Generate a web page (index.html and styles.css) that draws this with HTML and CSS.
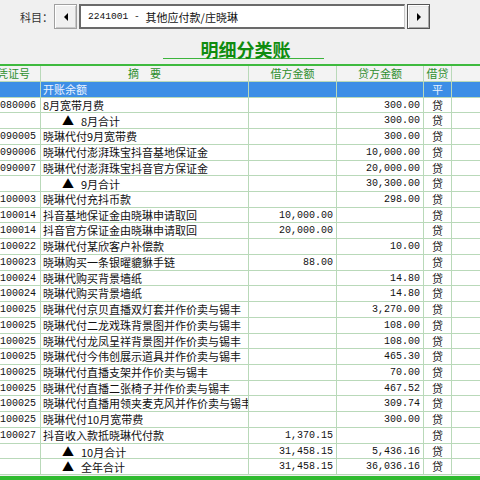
FILE: index.html
```html
<!DOCTYPE html>
<html lang="zh-CN">
<head>
<meta charset="utf-8">
<title>明细分类账</title>
<link rel="stylesheet" href="styles.css">
</head>
<body>
<div class="toolbar">
  <span class="label">科目：</span>
  <button class="nav-btn prev" type="button"><svg width="6" height="8" viewBox="0 0 6 8"><polygon points="5,0 5,8 1,4" fill="#000"/></svg></button>
  <div class="subject-box"><span class="num">2241001 - </span>其他应付款/庄晓琳</div>
  <button class="nav-btn next" type="button"><svg width="6" height="8" viewBox="0 0 6 8"><polygon points="1,0 1,8 5,4" fill="#000"/></svg></button>
</div>
<div class="title-row"><h1 class="title">明细分类账</h1></div>
<div class="ledger">
  <div class="grid">
    <div class="row head"><div class="c">凭证号</div><div class="c">摘　要</div><div class="c">借方金额</div><div class="c">贷方金额</div><div class="c">借贷</div><div class="c"></div></div>
    <div class="row sel"><div class="c v"></div><div class="c s">开账余额</div><div class="c a"></div><div class="c a"></div><div class="c d">平</div><div class="c"></div></div>
    <div class="row"><div class="c v">080006</div><div class="c s">8月宽带月费</div><div class="c a"></div><div class="c a">300.00</div><div class="c d">贷</div><div class="c"></div></div>
    <div class="row"><div class="c v"></div><div class="c s sub"><span class="tri">▲</span>8月合计</div><div class="c a"></div><div class="c a">300.00</div><div class="c d">贷</div><div class="c"></div></div>
    <div class="row"><div class="c v">090005</div><div class="c s">晓琳代付9月宽带费</div><div class="c a"></div><div class="c a">300.00</div><div class="c d">贷</div><div class="c"></div></div>
    <div class="row"><div class="c v">090006</div><div class="c s">晓琳代付澎湃珠宝抖音基地保证金</div><div class="c a"></div><div class="c a">10,000.00</div><div class="c d">贷</div><div class="c"></div></div>
    <div class="row"><div class="c v">090007</div><div class="c s">晓琳代付澎湃珠宝抖音官方保证金</div><div class="c a"></div><div class="c a">20,000.00</div><div class="c d">贷</div><div class="c"></div></div>
    <div class="row"><div class="c v"></div><div class="c s sub"><span class="tri">▲</span>9月合计</div><div class="c a"></div><div class="c a">30,300.00</div><div class="c d">贷</div><div class="c"></div></div>
    <div class="row"><div class="c v">100003</div><div class="c s">晓琳代付充抖币款</div><div class="c a"></div><div class="c a">298.00</div><div class="c d">贷</div><div class="c"></div></div>
    <div class="row"><div class="c v">100014</div><div class="c s">抖音基地保证金由晓琳申请取回</div><div class="c a">10,000.00</div><div class="c a"></div><div class="c d">贷</div><div class="c"></div></div>
    <div class="row"><div class="c v">100014</div><div class="c s">抖音官方保证金由晓琳申请取回</div><div class="c a">20,000.00</div><div class="c a"></div><div class="c d">贷</div><div class="c"></div></div>
    <div class="row"><div class="c v">100022</div><div class="c s">晓琳代付某欣客户补偿款</div><div class="c a"></div><div class="c a">10.00</div><div class="c d">贷</div><div class="c"></div></div>
    <div class="row"><div class="c v">100023</div><div class="c s">晓琳购买一条银曜貔貅手链</div><div class="c a">88.00</div><div class="c a"></div><div class="c d">贷</div><div class="c"></div></div>
    <div class="row"><div class="c v">100024</div><div class="c s">晓琳代购买背景墙纸</div><div class="c a"></div><div class="c a">14.80</div><div class="c d">贷</div><div class="c"></div></div>
    <div class="row"><div class="c v">100024</div><div class="c s">晓琳代购买背景墙纸</div><div class="c a"></div><div class="c a">14.80</div><div class="c d">贷</div><div class="c"></div></div>
    <div class="row"><div class="c v">100025</div><div class="c s">晓琳代付京贝直播双灯套并作价卖与锡丰</div><div class="c a"></div><div class="c a">3,270.00</div><div class="c d">贷</div><div class="c"></div></div>
    <div class="row"><div class="c v">100025</div><div class="c s">晓琳代付二龙戏珠背景图并作价卖与锡丰</div><div class="c a"></div><div class="c a">108.00</div><div class="c d">贷</div><div class="c"></div></div>
    <div class="row"><div class="c v">100025</div><div class="c s">晓琳代付龙凤呈祥背景图并作价卖与锡丰</div><div class="c a"></div><div class="c a">108.00</div><div class="c d">贷</div><div class="c"></div></div>
    <div class="row"><div class="c v">100025</div><div class="c s">晓琳代付今伟创展示道具并作价卖与锡丰</div><div class="c a"></div><div class="c a">465.30</div><div class="c d">贷</div><div class="c"></div></div>
    <div class="row"><div class="c v">100025</div><div class="c s">晓琳代付直播支架并作价卖与锡丰</div><div class="c a"></div><div class="c a">70.00</div><div class="c d">贷</div><div class="c"></div></div>
    <div class="row"><div class="c v">100025</div><div class="c s">晓琳代付直播二张椅子并作价卖与锡丰</div><div class="c a"></div><div class="c a">467.52</div><div class="c d">贷</div><div class="c"></div></div>
    <div class="row"><div class="c v">100025</div><div class="c s">晓琳代付直播用领夹麦克风并作价卖与锡丰</div><div class="c a"></div><div class="c a">309.74</div><div class="c d">贷</div><div class="c"></div></div>
    <div class="row"><div class="c v">100025</div><div class="c s">晓琳代付10月宽带费</div><div class="c a"></div><div class="c a">300.00</div><div class="c d">贷</div><div class="c"></div></div>
    <div class="row"><div class="c v">100027</div><div class="c s">抖音收入款抵晓琳代付款</div><div class="c a">1,370.15</div><div class="c a"></div><div class="c d">贷</div><div class="c"></div></div>
    <div class="row"><div class="c v"></div><div class="c s sub"><span class="tri">▲</span>10月合计</div><div class="c a">31,458.15</div><div class="c a">5,436.16</div><div class="c d">贷</div><div class="c"></div></div>
    <div class="row"><div class="c v"></div><div class="c s sub"><span class="tri">▲</span>全年合计</div><div class="c a">31,458.15</div><div class="c a">36,036.16</div><div class="c d">贷</div><div class="c"></div></div>
  </div>
</div>
<div class="footer-bar"></div>
</body>
</html>
```
FILE: styles.css
```css
html, body {
  margin: 0;
  padding: 0;
  background: #f0f0f0;
  width: 480px;
  height: 480px;
  overflow: hidden;
  font-family: "Noto Sans CJK SC", "Liberation Sans", sans-serif;
  color: #111;
}

.toolbar {
  display: flex;
  align-items: stretch;
  height: 25px;
  padding: 4px 0 0 20px;
}

.label {
  display: flex;
  align-items: center;
  width: 34px;
  font-size: 11px;
  white-space: nowrap;
  color: #333;
}

.nav-btn {
  width: 23px;
  height: 25px;
  padding: 0;
  margin: 0;
  display: flex;
  align-items: center;
  justify-content: center;
  background: #f0f0f0;
  box-sizing: border-box;
}

.prev {
  border: 1px solid #a0a0a0;
  box-shadow: inset 1px 1px 0 #ffffff, inset -1px -1px 0 #c8c8c8;
}

.next {
  margin-left: 2px;
  border: 1px solid #555;
  box-shadow: inset 1px 1px 0 #ffffff, inset -1px -1px 0 #a8a8a8, inset 2px 2px 0 #e6e6e6;
}

.subject-box {
  width: 326px;
  height: 25px;
  margin-left: 2px;
  box-sizing: border-box;
  background: #fff;
  border-top: 2px solid #6a6a6a;
  border-left: 2px solid #6a6a6a;
  border-right: 1px solid #c8c8c8;
  border-bottom: 2px solid #6a6a6a;
  padding-left: 7px;
  display: flex;
  align-items: center;
  font-size: 11px;
  white-space: pre;
  color: #111;
}

.num {
  font-family: "Liberation Mono", monospace;
  font-size: 9.6px;
}

.title-row {
  margin-top: 11px;
  padding-left: 163px;
}

.title {
  margin: 0;
  width: 157px;
  height: 18px;
  border-bottom: 1px solid #3cb43c;
  font-size: 18px;
  line-height: 18px;
  font-weight: bold;
  color: #0f8c0f;
  text-align: center;
  padding-left: 4px;
  box-sizing: content-box;
}

.ledger {
  margin-top: 5px;
  border-top: 2px solid #3fba3f;
  overflow: hidden;
  width: 480px;
}

.grid {
  margin-left: -13px;
  width: 540px;
}

.row {
  display: grid;
  grid-template-columns: 54px 208px 88px 87px 28px 75px;
  height: 15.72px;
}

.row.head {
  height: 16px;
}

.c {
  box-sizing: border-box;
  border-right: 1px solid #b9d9b9;
  border-bottom: 1px solid #b9d9b9;
  background: #fff;
  font-size: 11px;
  line-height: 15px;
  white-space: pre;
  overflow: hidden;
}

.head .c {
  background: #f3f3f3;
  color: #2f8f2f;
  text-align: center;
  line-height: 15px;
}

.v {
  text-align: right;
  padding-right: 4px;
  font-family: "Liberation Mono", monospace;
  font-size: 10px;
}

.s {
  padding-left: 2px;
}

.sub {
  padding-left: 21px;
}

.tri {
  display: inline-block;
  width: 19px;
  font-size: 12px;
  color: #000;
}

.a {
  text-align: right;
  padding-right: 3px;
  font-family: "Liberation Mono", monospace;
  font-size: 10px;
}

.d {
  text-align: center;
}

.sel .c {
  background: #3c8ee6;
  color: #eaf2ff;
}

.footer-bar {
  margin-top: 1px;
  height: 4px;
  background: #2fbb2f;
}
```
